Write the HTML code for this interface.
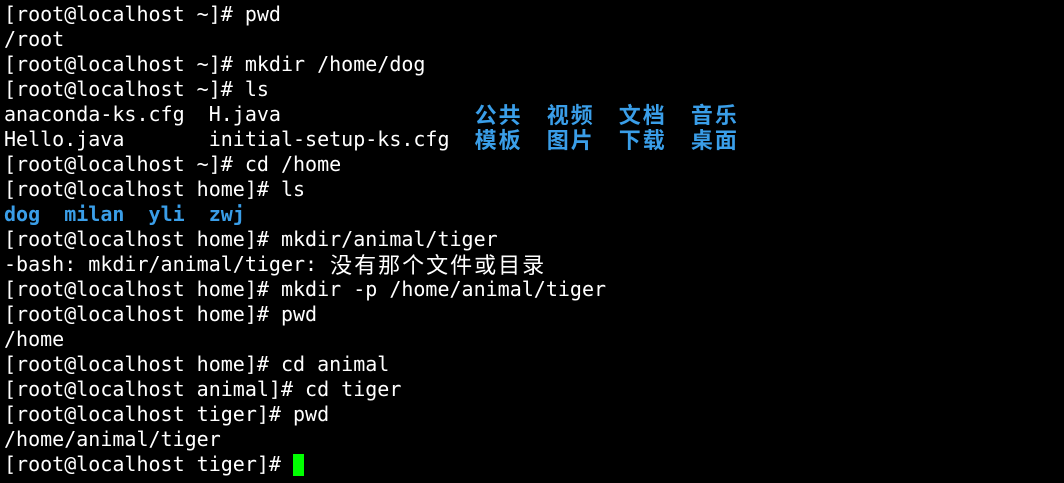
<!DOCTYPE html>
<html><head><meta charset="utf-8"><style>
html,body{margin:0;background:#000;width:1064px;height:483px;overflow:hidden}
pre{margin:0;padding:2px 0 0 4px;font-family:"DejaVu Sans Mono","Liberation Mono","Noto Sans CJK SC",monospace;font-size:20px;line-height:25px;color:#fff}
b{color:#3a9ee8;font-weight:bold}
i{font-style:normal;display:inline-block;width:24px;text-align:center;font-family:"Noto Sans CJK SC","WenQuanYi Zen Hei",sans-serif;font-size:22px;line-height:25px;vertical-align:top;letter-spacing:0}
.c{display:inline-block;width:11px;height:22px;background:#00ff00;vertical-align:-5px}
</style></head><body><pre>[root@localhost ~]# pwd
/root
[root@localhost ~]# mkdir /home/dog
[root@localhost ~]# ls
anaconda-ks.cfg  H.java                <b><i>公</i><i>共</i>  <i>视</i><i>频</i>  <i>文</i><i>档</i>  <i>音</i><i>乐</i></b>
Hello.java       initial-setup-ks.cfg  <b><i>模</i><i>板</i>  <i>图</i><i>片</i>  <i>下</i><i>载</i>  <i>桌</i><i>面</i></b>
[root@localhost ~]# cd /home
[root@localhost home]# ls
<b>dog</b>  <b>milan</b>  <b>yli</b>  <b>zwj</b>
[root@localhost home]# mkdir/animal/tiger
-bash: mkdir/animal/tiger: <i>没</i><i>有</i><i>那</i><i>个</i><i>文</i><i>件</i><i>或</i><i>目</i><i>录</i>
[root@localhost home]# mkdir -p /home/animal/tiger
[root@localhost home]# pwd
/home
[root@localhost home]# cd animal
[root@localhost animal]# cd tiger
[root@localhost tiger]# pwd
/home/animal/tiger
[root@localhost tiger]# <span class="c"></span></pre></body></html>
